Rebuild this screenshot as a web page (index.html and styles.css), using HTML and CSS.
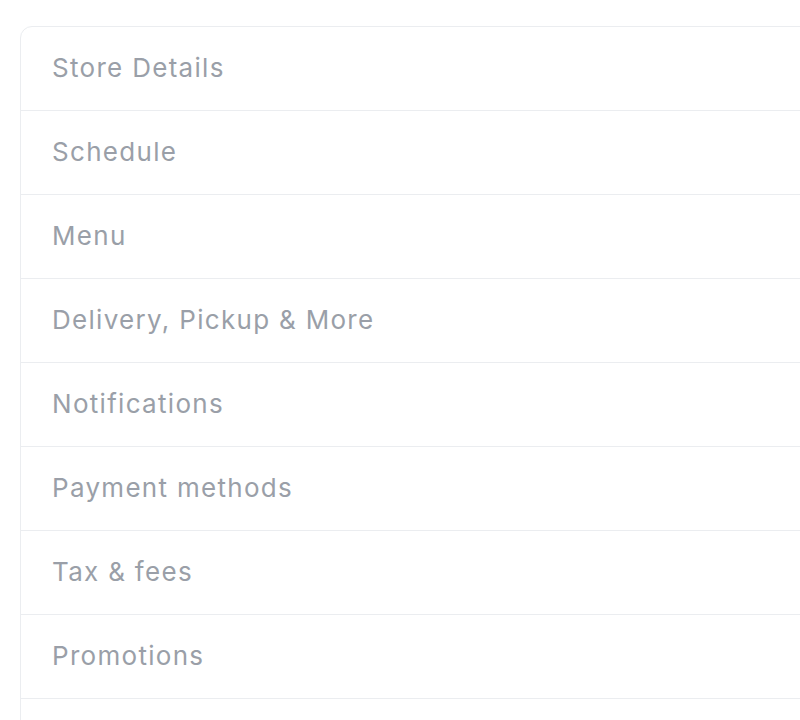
FILE: index.html
```html
<!DOCTYPE html>
<html lang="en">
<head>
    <meta charset="UTF-8">
    <meta name="viewport" content="width=device-width, initial-scale=1.0">
    <title>Store Settings</title>
    <link rel="stylesheet" href="styles.css">
</head>
<body>
    <div class="settings-card">
        <div class="settings-item">Store Details</div>
        <div class="settings-item">Schedule</div>
        <div class="settings-item">Menu</div>
        <div class="settings-item">Delivery, Pickup &amp; More</div>
        <div class="settings-item">Notifications</div>
        <div class="settings-item">Payment methods</div>
        <div class="settings-item">Tax &amp; fees</div>
        <div class="settings-item">Promotions</div>
        <div class="settings-item"></div>
    </div>
</body>
</html>
```

FILE: styles.css
```css
body {
    font-family: 'Inter', 'Open Sans', sans-serif;
    background-color: #ffffff;
    margin: 0;
    padding: 26px 0 0 20px;
    overflow: hidden;
    height: 720px;
    box-sizing: border-box;
}

.settings-card {
    margin-right: -40px;
    border: 1px solid #ebedf0;
    border-radius: 12px 0 0 0;
    background-color: #ffffff;
}

.settings-item {
    display: flex;
    align-items: center;
    height: 83px;
    padding-left: 31px;
    border-bottom: 1px solid #ebedf0;
    font-size: 26px;
    color: #9a9fa8;
    letter-spacing: 1.3px;
    padding-bottom: 2px;
    box-sizing: border-box;
    height: 84px;
}
```
